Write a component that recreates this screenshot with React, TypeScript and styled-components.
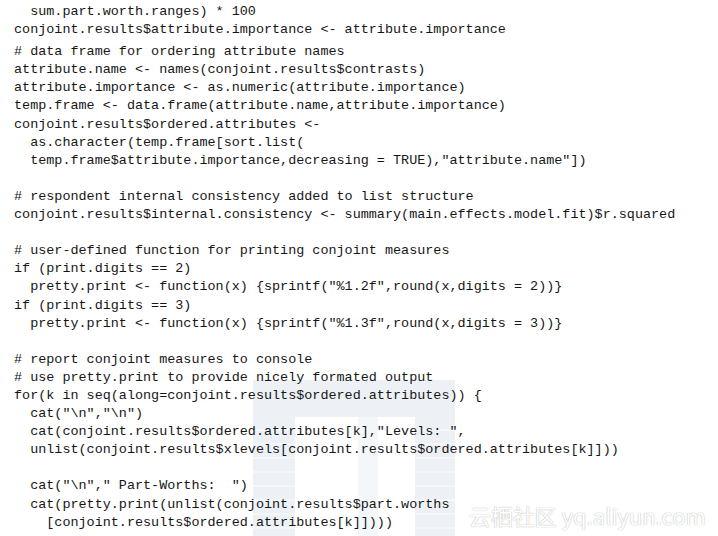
import React from "react";
import styled, { createGlobalStyle } from "styled-components";

const Global = createGlobalStyle`
  html, body { margin: 0; padding: 0; background: #ffffff; }
  body { width: 718px; height: 536px; overflow: hidden; }
`;

const Page = styled.div`
  position: relative;
  width: 718px;
  height: 536px;
  background: #ffffff;
  overflow: hidden;
`;

const Watermark = styled.div`
  position: absolute;
  left: 253px;
  top: 380px;
  width: 202px;
  height: 156px;
  display: grid;
  grid-template-columns: 42px 1fr 40px;
  grid-template-rows: 37px 1fr;
  z-index: 0;
`;

const MarkTop = styled.div`
  grid-column: 1 / 4;
  grid-row: 1;
  background: #edf1f6;
`;

const MarkSide = styled.div<{ $col: number }>`
  grid-column: ${(p) => p.$col};
  grid-row: 2;
  background: repeating-linear-gradient(
    180deg,
    #edf1f6 0px,
    #edf1f6 12px,
    #f4f6f9 12px,
    #f4f6f9 14px
  );
`;

const MarkInner = styled.div`
  grid-column: 2;
  grid-row: 2;
  display: flex;
  justify-content: flex-end;
  padding-right: 37px;
`;

const MarkInnerBar = styled.div`
  width: 20px;
  background: #f4f7fa;
`;

const Code = styled.div`
  position: relative;
  z-index: 1;
  padding: 3px 0 0 14px;
  font-family: "Liberation Mono", "DejaVu Sans Mono", monospace;
  font-size: 13.45px;
  color: #161616;
`;

const Line = styled.div<{ $gap?: number }>`
  white-space: pre;
  height: 18.1px;
  line-height: 18.1px;
  margin-bottom: ${(p) => p.$gap ?? 0}px;
`;

const Stamp = styled.div`
  position: absolute;
  right: 12px;
  bottom: 8px;
  z-index: 2;
  font-family: "Noto Sans CJK SC", "Noto Sans", sans-serif;
  font-size: 22px;
  line-height: 26px;
  color: #ffffff;
  text-shadow: 0 0 1px rgba(0, 0, 0, 0.3), 0 0 2px rgba(0, 0, 0, 0.12);
  white-space: nowrap;
`;

const lines: { t: string; gap?: number }[] = [
  { t: "  sum.part.worth.ranges) * 100" },
  { t: "conjoint.results$attribute.importance <- attribute.importance", gap: 4 },
  { t: "# data frame for ordering attribute names" },
  { t: "attribute.name <- names(conjoint.results$contrasts)" },
  { t: "attribute.importance <- as.numeric(attribute.importance)" },
  { t: "temp.frame <- data.frame(attribute.name,attribute.importance)" },
  { t: "conjoint.results$ordered.attributes <-" },
  { t: "  as.character(temp.frame[sort.list(" },
  { t: '  temp.frame$attribute.importance,decreasing = TRUE),"attribute.name"])' },
  { t: "" },
  { t: "# respondent internal consistency added to list structure" },
  { t: "conjoint.results$internal.consistency <- summary(main.effects.model.fit)$r.squared" },
  { t: "" },
  { t: "# user-defined function for printing conjoint measures" },
  { t: "if (print.digits == 2)" },
  { t: '  pretty.print <- function(x) {sprintf("%1.2f",round(x,digits = 2))}' },
  { t: "if (print.digits == 3)" },
  { t: '  pretty.print <- function(x) {sprintf("%1.3f",round(x,digits = 3))}' },
  { t: "" },
  { t: "# report conjoint measures to console" },
  { t: "# use pretty.print to provide nicely formated output" },
  { t: "for(k in seq(along=conjoint.results$ordered.attributes)) {" },
  { t: '  cat("\\n","\\n")' },
  { t: '  cat(conjoint.results$ordered.attributes[k],"Levels: ",' },
  { t: "  unlist(conjoint.results$xlevels[conjoint.results$ordered.attributes[k]]))" },
  { t: "" },
  { t: '  cat("\\n"," Part-Worths:  ")' },
  { t: "  cat(pretty.print(unlist(conjoint.results$part.worths" },
  { t: "    [conjoint.results$ordered.attributes[k]])))" },
];

export default function App() {
  return (
    <Page>
      <Global />
      <Watermark>
        <MarkTop />
        <MarkSide $col={1} />
        <MarkInner>
          <MarkInnerBar />
        </MarkInner>
        <MarkSide $col={3} />
      </Watermark>
      <Code>
        {lines.map((l, i) => (
          <Line key={i} $gap={l.gap}>
            {l.t}
          </Line>
        ))}
      </Code>
      <Stamp>云栖社区 yq.aliyun.com</Stamp>
    </Page>
  );
}
